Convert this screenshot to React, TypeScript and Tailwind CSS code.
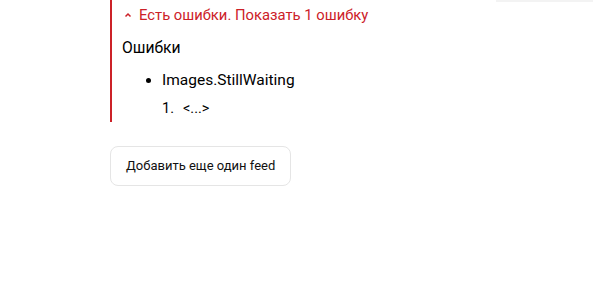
import React from "react";

export default function App() {
  return (
    <div className="w-[593px] h-[293px] bg-white relative overflow-hidden" style={{ fontFamily: "Roboto, 'Noto Sans', sans-serif" }}>
      <div className="absolute right-0 top-0 w-[97px] h-[2px] bg-[#f3f3f3]" />
      <div className="pl-[110px]">
        <div className="border-l-2 border-[#cc2128] pl-[10px] pb-[1px] w-[300px]">
          <div className="flex items-center h-[30px] text-[14.8px] text-[#cc2128]">
            <svg width="10" height="10" viewBox="0 0 10 10" className="ml-[1px] mr-[5px]">
              <path d="M2.5 6.5 L5 4 L7.5 6.5" fill="none" stroke="#cc2128" strokeWidth="1.5" />
            </svg>
            <span className="ml-[1px]">Есть ошибки. Показать 1 ошибку</span>
          </div>
          <div className="mt-[6px] text-[15.7px] text-black leading-[24px]">Ошибки</div>
          <ul className="mt-[8px] pl-[40px] list-disc text-[15.5px] text-black leading-[24px]">
            <li>Images.StillWaiting</li>
          </ul>
          <div className="mt-[5px] pl-[40px] flex text-[14.5px] text-black leading-[24px]">
            <span className="w-[21px]">1.</span>
            <span>&lt;...&gt;</span>
          </div>
        </div>
      </div>
      <div className="pl-[110px] mt-[24px]">
        <button className="h-[40px] px-[15px] border border-[#e5e5e5] rounded-[8px] text-[13px] text-[#111]">
          Добавить еще один feed
        </button>
      </div>
    </div>
  );
}
